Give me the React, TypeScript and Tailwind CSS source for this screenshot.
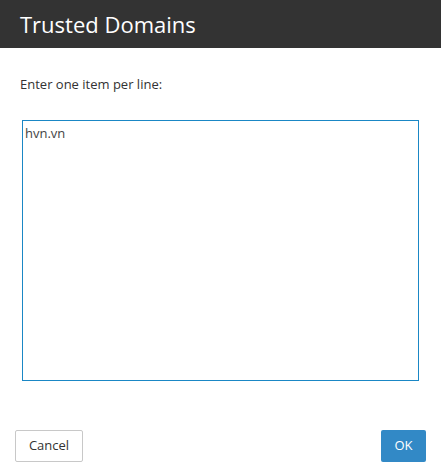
export default function App() {
  return (
    <div className="w-[441px] h-[475px] bg-white flex flex-col font-['Open_Sans',sans-serif] text-[#333]">
      <div className="h-[48px] bg-[#333333] flex items-center px-5">
        <h1 className="text-[22px] text-white leading-none">Trusted Domains</h1>
      </div>
      <div className="flex flex-col px-5 pt-[27px]">
        <p className="text-[13px] leading-[18px]">Enter one item per line:</p>
        <textarea
          defaultValue="hvn.vn"
          className="mt-[27px] ml-[2px] w-[397px] h-[261px] border border-[#1a87c5] outline-none resize-none px-[2px] py-[3px] text-[13px] leading-[18px] text-[#444]"
        />
      </div>
      <div className="flex justify-between px-[15px] mt-[49px]">
        <button className="w-[68px] h-[32px] border border-[#c8c8c8] rounded-[2px] text-[13px] text-[#333] bg-white">Cancel</button>
        <button className="w-[45px] h-[32px] rounded-[2px] text-[13px] text-white bg-[#3289c6]">OK</button>
      </div>
    </div>
  );
}
